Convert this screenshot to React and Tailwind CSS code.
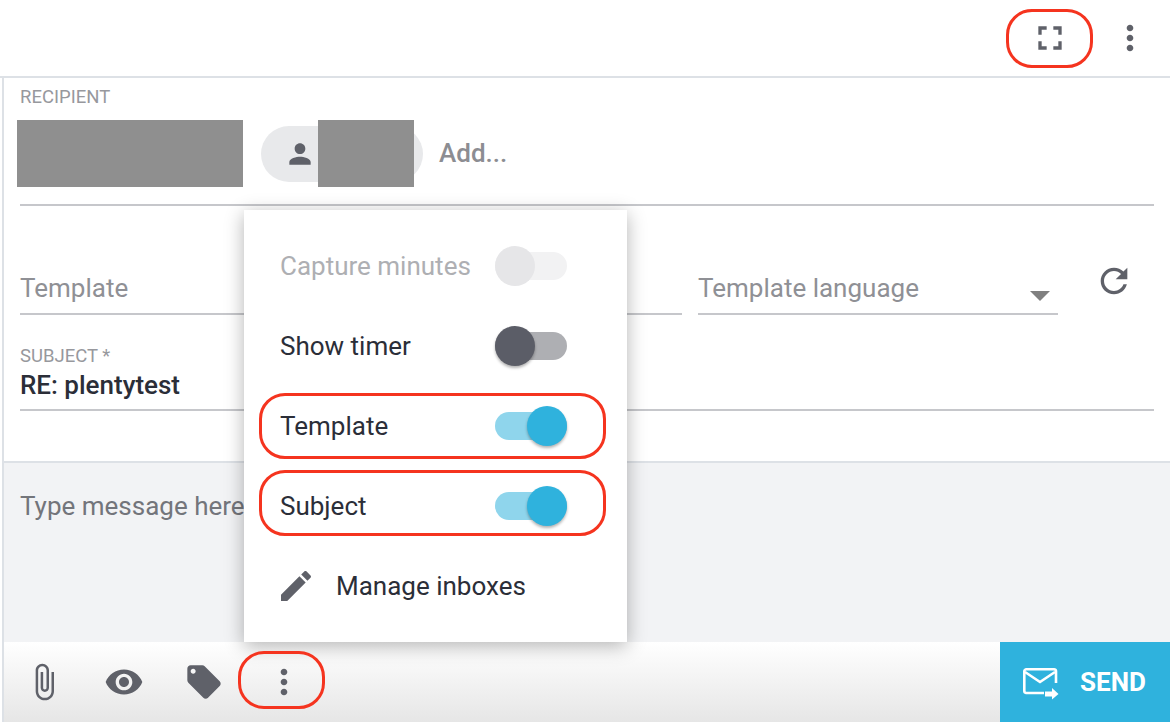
import { Fragment } from 'react';

const ICONS = {
  fullscreen: 'M7 14H5v5h5v-2H7v-3zm-2-4h2V7h3V5H5v5zm12 7h-3v2h5v-5h-2v3zM14 5v2h3v3h2V5h-5z',
  more: 'M12 8c1.1 0 2-.9 2-2s-.9-2-2-2-2 .9-2 2 .9 2 2 2zm0 2c-1.1 0-2 .9-2 2s.9 2 2 2 2-.9 2-2-.9-2-2-2zm0 6c-1.1 0-2 .9-2 2s.9 2 2 2 2-.9 2-2-.9-2-2-2z',
  person: 'M12 12c2.21 0 4-1.79 4-4s-1.79-4-4-4-4 1.79-4 4 1.79 4 4 4zm0 2c-2.67 0-8 1.34-8 4v2h16v-2c0-2.66-5.33-4-8-4z',
  edit: 'M3 17.25V21h3.75L17.81 9.94l-3.75-3.75L3 17.25zM20.71 7.04c.39-.39.39-1.02 0-1.41l-2.34-2.34c-.39-.39-1.02-.39-1.41 0l-1.83 1.83 3.75 3.75 1.83-1.83z',
  attach: 'M16.5 6v11.5c0 2.21-1.79 4-4 4s-4-1.79-4-4V5c0-1.38 1.12-2.5 2.5-2.5s2.5 1.12 2.5 2.5v10.5c0 .55-.45 1-1 1s-1-.45-1-1V6H10v9.5c0 1.38 1.12 2.5 2.5 2.5s2.5-1.12 2.5-2.5V5c0-2.21-1.79-4-4-4S7 2.79 7 5v12.5c0 3.04 2.46 5.5 5.5 5.5s5.5-2.46 5.5-5.5V6h-1.5z',
  eye: 'M12 4.5C7 4.5 2.73 7.61 1 12c1.73 4.39 6 7.5 11 7.5s9.27-3.11 11-7.5c-1.73-4.39-6-7.5-11-7.5zM12 17c-2.76 0-5-2.24-5-5s2.24-5 5-5 5 2.24 5 5-2.24 5-5 5zm0-8c-1.66 0-3 1.34-3 3s1.34 3 3 3 3-1.34 3-3-1.34-3-3-3z',
  tag: 'M21.41 11.58l-9-9C12.05 2.22 11.55 2 11 2H4c-1.1 0-2 .9-2 2v7c0 .55.22 1.05.59 1.42l9 9c.36.36.86.58 1.41.58.55 0 1.05-.22 1.41-.59l7-7c.37-.36.59-.86.59-1.41 0-.55-.23-1.06-.59-1.42zM5.5 7C4.67 7 4 6.33 4 5.5S4.67 4 5.5 4 7 4.67 7 5.5 6.33 7 5.5 7z',
  refresh: 'M17.65 6.35C16.2 4.9 14.21 4 12 4c-4.42 0-7.99 3.58-7.99 8s3.57 8 7.99 8c3.73 0 6.84-2.55 7.73-6h-2.08c-.82 2.33-3.04 4-5.65 4-3.31 0-6-2.69-6-6s2.69-6 6-6c1.66 0 3.14.69 4.22 1.78L13 11h7V4l-2.35 2.35z',
};

function Icon({ name, className = 'h-10 w-10' }) {
  return (
    <svg viewBox="0 0 24 24" fill="#5f6169" className={`shrink-0 ${className}`}>
      <path d={ICONS[name]} />
    </svg>
  );
}

function Toggle({ state }) {
  const track = { off: 'bg-[#f2f2f3]', dark: 'bg-[#aeafb3]', on: 'bg-[#8fd5ec]' }[state];
  const thumb = {
    off: 'bg-[#e6e6e8]',
    dark: 'bg-[#5b5d67] shadow-[0_2px_3px_rgba(0,0,0,0.3)]',
    on: 'ml-8 bg-[#2fb2dd] shadow-[0_2px_3px_rgba(0,0,0,0.3)]',
  }[state];
  return (
    <div className={`flex h-7 w-[72px] items-center rounded-full ${track}`}>
      <div className={`h-10 w-10 rounded-full ${thumb}`} />
    </div>
  );
}

function MenuRow({ label, state, disabled }) {
  return (
    <div className="flex h-20 items-center justify-between pl-9 pr-[60px]">
      <span className={`text-[26px] ${disabled ? 'text-[#aeafb3]' : 'text-[#2b2e38]'}`}>{label}</span>
      <Toggle state={state} />
    </div>
  );
}

function Ring({ className }) {
  return <div className={`pointer-events-none absolute border-[3px] border-[#f5341f] ${className}`} />;
}

export default function App() {
  return (
    <div className="relative flex h-[722px] w-[1170px] flex-col overflow-hidden bg-white font-['Roboto',sans-serif]">
      <header className="flex h-[78px] shrink-0 items-center justify-end gap-10 border-b-2 border-[#dde1e6] pr-5">
        <Icon name="fullscreen" />
        <Icon name="more" />
      </header>

      <div className="ml-0.5 flex min-h-0 flex-1 flex-col border-l-2 border-[#dde1e6]">
        <section className="flex h-[128px] shrink-0 flex-col">
          <div className="pl-4 pt-[9px] text-[18.500px] leading-5 text-[#97989d]">RECIPIENT</div>
          <div className="mt-[13px] flex h-[67px] items-center">
            <div className="ml-[13px] h-[67px] w-[226px] bg-[#8f8f8f]" />
            <div className="relative ml-[18px] flex h-14 w-[162px] items-center rounded-full bg-[#e8e9eb] pl-[23px]">
              <Icon name="person" className="h-8 w-8" />
              <div className="absolute left-[57px] top-[-6px] h-[67px] w-[96px] bg-[#8f8f8f]" />
            </div>
            <span className="ml-4 text-[26px] font-medium text-[#8c8d92]">Add...</span>
          </div>
          <div className="ml-4 mr-4 mt-auto h-0.5 bg-[#c6c7cb]" />
        </section>

        <section className="flex h-[109px] shrink-0 pl-4">
          <div className="flex h-full w-[662px] items-end border-b-2 border-[#c6c7cb] pb-[9px] text-[26px] leading-8 text-[#8f9095]">
            Template
          </div>
          <div className="ml-4 flex h-full w-[360px] items-end justify-between border-b-2 border-[#c6c7cb] pb-[9px] text-[26px] leading-8 text-[#8f9095]">
            <span>Template language</span>
            <span className="mb-[3px] mr-2 h-0 w-0 border-x-[10px] border-t-[10px] border-x-transparent border-t-[#808080]" />
          </div>
          <div className="ml-9 mt-[55px]">
            <Icon name="refresh" />
          </div>
        </section>

        <section className="flex h-[96px] shrink-0 flex-col pl-4 pr-4">
          <div className="mt-[31px] text-[18.500px] leading-5 text-[#97989d]">SUBJECT *</div>
          <div className="mt-[3px] text-[26px] font-medium leading-8 text-[#2b2e38]">RE: plentytest</div>
          <div className="mt-auto h-0.5 bg-[#c6c7cb]" />
        </section>

        <div className="h-[52px] shrink-0 border-b-2 border-[#dde1e6]" />

        <section className="flex-1 bg-[#f2f3f5] pl-4 pt-[27px] text-[26px] leading-8 text-[#73757b]">
          Type message here
        </section>

        <footer className="flex h-20 shrink-0 items-center bg-gradient-to-b from-white to-[#e6e6e6]">
          <div className="flex items-center">
            <div className="ml-[20px]"><Icon name="attach" /></div>
            <div className="ml-[40px]"><Icon name="eye" /></div>
            <div className="ml-[40px]"><Icon name="tag" /></div>
            <div className="ml-[40px]"><Icon name="more" /></div>
          </div>
          <button className="ml-auto flex h-full w-[170px] items-center bg-[#2fb2dd] pl-[23px] text-[26px] font-bold text-white">
            <svg viewBox="0 0 36 32" fill="none" stroke="#fff" strokeWidth="2.600" className="mt-1 h-8 w-9">
              <path d="M21 25H3A2 2 0 0 1 1.300 23V3A2 2 0 0 1 3 1.300H31A2 2 0 0 1 33 3V15" />
              <path d="M2 4L17 14L32 4" />
              <path d="M22 26H29" strokeWidth="5" />
              <path d="M29 20L35.500 26L29 31.500Z" fill="#fff" stroke="none" />
            </svg>
            <span className="ml-[21px]">SEND</span>
          </button>
        </footer>
      </div>

      <div className="absolute left-[244px] top-[210px] h-[432px] w-[383px] bg-white py-4 shadow-[0_4px_18px_rgba(0,0,0,0.3)]">
        <MenuRow label="Capture minutes" state="off" disabled />
        <MenuRow label="Show timer" state="dark" />
        <MenuRow label="Template" state="on" />
        <MenuRow label="Subject" state="on" />
        <div className="flex h-20 items-center pl-[32px] text-[26px] text-[#2b2e38]">
          <Icon name="edit" />
          <span className="ml-5">Manage inboxes</span>
        </div>
      </div>

      <Fragment>
        <Ring className="left-[1006px] top-[9px] h-[59px] w-[87px] rounded-[26px]" />
        <Ring className="left-[259px] top-[393px] h-[66px] w-[347px] rounded-[26px]" />
        <Ring className="left-[259px] top-[470px] h-[66px] w-[347px] rounded-[26px]" />
        <Ring className="left-[238px] top-[651px] h-[58px] w-[87px] rounded-[26px]" />
      </Fragment>
    </div>
  );
}
